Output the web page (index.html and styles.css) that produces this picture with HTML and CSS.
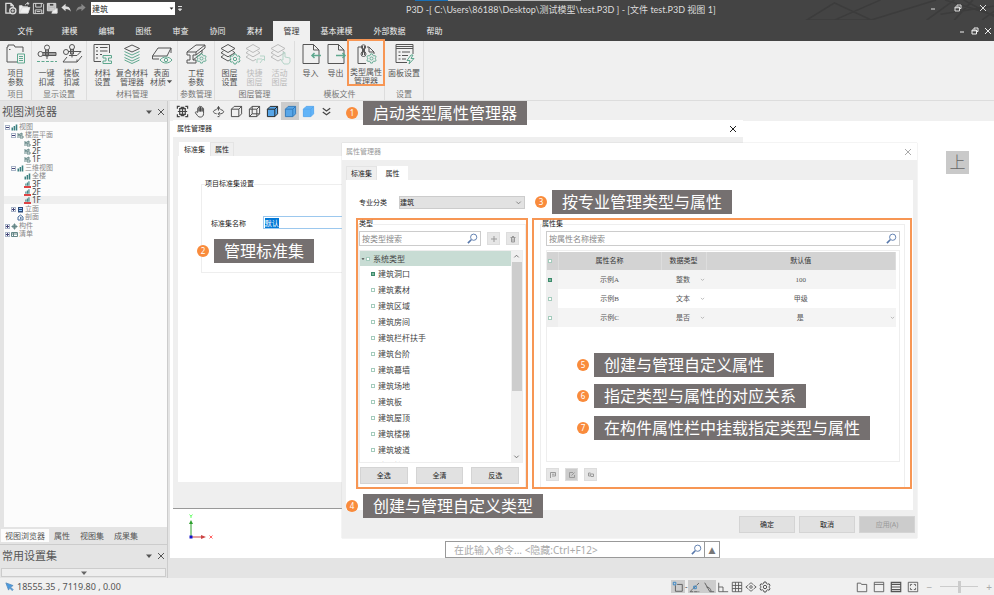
FILE: index.html
```
<!DOCTYPE html>
<html lang="zh-CN">

<head>
    <meta charset="UTF-8">
    <meta name="viewport" content="width=device-width, initial-scale=1.0">
    <title>P3D - 属性管理器</title>
    <link rel="stylesheet" href="styles.css">
</head>

<body>
    <!-- 公用图标 -->
    <svg class="symbols" aria-hidden="true">
        <symbol id="i_search" viewBox="0 0 12 12"><path d="M4.6 7.4L1 11" stroke-width="1.8"/><circle cx="7.3" cy="4.6" r="3.4"/></symbol>
        <symbol id="i_close" viewBox="0 0 8 8"><path d="M1 1l6 6M7 1l-6 6"/></symbol>
        <symbol id="i_restore" viewBox="0 0 8 8"><path d="M3 2.500V1h4v3.500H5.500M1 3h4.500v4H1zM1 3.800h4.500"/></symbol>
        <symbol id="i_down" viewBox="0 0 8 8"><path d="M1 2.500h6L4 6z" fill="currentColor" stroke="none"/></symbol>
        <symbol id="i_chevron" viewBox="0 0 8 8"><path d="M1.500 3L4 5.500 6.500 3"/></symbol>
        <symbol id="i_gear" viewBox="0 0 12 12"><path d="M5 1h2l.4 1.500 1.200.7 1.500-.4 1 1.700L10 5.500v1l1.100 1-1 1.700-1.500-.4-1.200.7L7 11H5l-.4-1.500-1.200-.7-1.500.4-1-1.700L2 6.500v-1l-1.100-1 1-1.700 1.500.4 1.200-.7z"/><circle cx="6" cy="6" r="1.700"/></symbol>
        <symbol id="i_layers" viewBox="0 0 22 22"><path d="M9 1.500l7 4-7 4-7-4zM4.500 8L2 9.800l7 4 7-4L13.500 8M4.500 12.300L2 14l7 4 3-1.700"/></symbol>
        <symbol id="i_cube" viewBox="0 0 14 14"><path d="M1.500 4.500h8v8h-8zM1.500 4.500l3-3h8v8l-3 3M9.500 4.500l3-3"/></symbol>
        <symbol id="i_plan" viewBox="0 0 7 7"><path d="M1 1v5M1 3l4-2v2H1M3 3v3h3V4H3"/></symbol>
        <symbol id="i_bars" viewBox="0 0 7 7"><path d="M.5 3.500h1.500v3H.5zM2.600 2h1.500v4.500H2.600zM4.700.5h1.600v6H4.700z" fill="currentColor" stroke="none"/></symbol>
    </svg>

    <div class="app">
        <header class="title_bar">
            <div class="quick_bar">
                <button aria-label="新建"><svg viewBox="0 0 14 14"><path d="M7 12H2V1.500h5.500L10 4v2M7.500 1.500V4H10" stroke-width="1.400"/><circle cx="9.500" cy="9.500" r="3.300" fill="#444" stroke-width="1.400"/><path d="M9.500 7.700v3.600M7.700 9.500h3.600"/></svg></button>
                <button aria-label="打开"><svg viewBox="0 0 14 14"><path d="M1.500 12V4h3l1 1.200h5V6H4.500zM1.500 12h9.300l2-6H4.500z" fill="#eee"/><path d="M8 3.500c0-1.500 1-2 3-2M9.800.5L12 1.600 10.200 3"/></svg></button>
                <button aria-label="保存"><svg viewBox="0 0 14 14"><path d="M1.500 1.500h10l1 1v10h-11zM4 1.500v4h6v-4M3.500 12V8.500h7V12M5 10.300h4"/></svg></button>
                <button aria-label="另存为"><svg viewBox="0 0 14 14"><path d="M1.500 1.500h9v8h-9zM3.500 1.500v3h5v-3" fill="#bbb"/><path d="M4 7.500h5M7 10l5-3v5H6" fill="#eee"/></svg></button>
                <button aria-label="撤销"><svg viewBox="0 0 14 14"><path d="M6 2L1.500 6 6 10V7.500c3 0 4.500.8 5.500 3C11.500 6.500 9.500 4.700 6 4.500z" fill="#ddd" stroke="none"/></svg></button>
                <button class="dim" aria-label="重做"><svg viewBox="0 0 14 14"><path d="M8 2l4.500 4L8 10V7.500c-3 0-4.500.8-5.500 3C2.500 6.500 4.500 4.700 8 4.500z" fill="#888" stroke="none"/></svg></button>
                <div class="quick_select">
                    <select aria-label="专业"><option>建筑</option></select>
                    <svg viewBox="0 0 8 8"><use href="#i_down"/></svg>
                </div>
                <button class="more" aria-label="更多"><svg viewBox="0 0 8 8"><path d="M2 1.500h4M2.500 4h3L4 5.800z" fill="currentColor"/></svg></button>
            </div>
            <h1>P3D -[ C:\Users\86188\Desktop\测试模型\test.P3D ] - [文件 test.P3D 视图 1]</h1>
            <svg class="title_art" viewBox="0 0 260 28" preserveAspectRatio="none"><path d="M30 28L60 4l40 24zM110 0l-50 28M170 0l-70 28M190 0l-30 28M200 0l40 28M220 28L250 0M175 20l80-16M180 0l70 28M210 0l-20 28"/></svg>
            <div class="window_buttons">
                <button aria-label="最小化"><svg viewBox="0 0 8 8"><path d="M2 5h4"/></svg></button>
                <button aria-label="还原"><svg viewBox="0 0 8 8"><use href="#i_restore"/></svg></button>
                <button aria-label="关闭"><svg viewBox="0 0 8 8"><use href="#i_close"/></svg></button>
            </div>
            <div class="load_line"></div>
        </header>

        <nav class="menu_bar">
            <button class="file">文件</button>
            <button>建模</button>
            <button>编辑</button>
            <button>图纸</button>
            <button>审查</button>
            <button>协同</button>
            <button>素材</button>
            <button class="active">管理</button>
            <button class="wide">基本建模</button>
            <button class="wide">外部数据</button>
            <button>帮助</button>
            <div class="window_buttons small">
                <button aria-label="最小化视图"><svg viewBox="0 0 8 8"><path d="M2 5h4"/></svg></button>
                <button aria-label="还原视图"><svg viewBox="0 0 8 8"><use href="#i_restore"/></svg></button>
                <button aria-label="关闭视图"><svg viewBox="0 0 8 8"><use href="#i_close"/></svg></button>
            </div>
        </nav>

        <div class="ribbon">
            <section class="group">
                <div class="tools">
                    <button class="tool"><svg viewBox="0 0 22 22"><path d="M12 19H2V4h1V2h6l1 2h8v5M4 6.500h1.500"/><path class="green" d="M12.500 11h7v9h-7zM14 13.500h4M14 15.500h4M14 17.500h4"/></svg><span>项目<br>参数</span></button>
                </div>
                <p>项目</p>
            </section>
            <section class="group">
                <div class="tools">
                    <button class="tool"><svg viewBox="0 0 22 22"><circle cx="11" cy="4.500" r="2.500"/><circle cx="4.500" cy="11" r="2.500"/><path d="M11 7v9M7 11h13M7 9.500h13v3H7M9.500 7v6h3V7"/><path class="green" d="M1 18.500h20" stroke-dasharray="3 1.500"/></svg><span>一键<br>扣减</span></button>
                    <button class="tool"><svg viewBox="0 0 22 22"><circle cx="11" cy="4" r="2.500"/><circle cx="5" cy="9" r="2.500"/><path d="M11 6.500v8M7 8.500h13l-4 4H8M9.500 6v5h3V6M6 14l-4 5h14l5-6M16 19v-2.500"/></svg><span>楼板<br>扣减</span></button>
                </div>
                <p>显示设置</p>
            </section>
            <section class="group material">
                <div class="tools">
                    <button class="tool"><svg viewBox="0 0 22 22"><path d="M9 18.500H2v-17h15.500V10M4 4.500h2M8 4.500h7.500M4 8h2M8 8h7.500M4 11.500h2M8 11.500h2M4 15h2"/><path class="green" d="M11 12.500h8.500V15h-3v3h3v2.500H11V18h3v-3h-3z"/></svg><span>材料<br>设置</span></button>
                    <button class="tool"><svg viewBox="0 0 22 22"><path d="M11 2l7.500 3.500L11 9 3.500 5.500z"/><path class="green" d="M3.500 8.500L11 12l7.500-3.500M3.500 11.500L11 15l7.500-3.500M3.500 14.500L11 18l7.500-3.500M3.500 17L11 20.500l7.500-3.500"/></svg><span>复合材料<br>管理器</span></button>
                    <button class="tool"><svg viewBox="0 0 22 22"><path d="M7 5h13l-4 8H1.500zM1.500 13v3H8M20 5v5"/><path class="green" d="M9 17c3-4 9-4 12 0-3 4-9 4-12 0z"/><circle class="green" cx="15" cy="17" r="1.700"/></svg><span>表面</span><span class="drop">材质<svg class="caret" viewBox="0 0 8 8"><use href="#i_down"/></svg></span></button>
                </div>
                <p>材料管理</p>
            </section>
            <section class="group">
                <div class="tools">
                    <button class="tool"><svg viewBox="0 0 22 22"><path d="M2 9L11 2h9l-9 7zM2 9v3h3v5H2v3h9v-3M11 9v3H8v5h3M11 12l9-7V2M8 17l9-7V7"/><svg x="11" y="10" width="11" height="11"><use class="green" href="#i_gear"/></svg></svg><span>工程<br>参数</span></button>
                </div>
                <p>参数管理</p>
            </section>
            <section class="group">
                <div class="tools">
                    <button class="tool"><svg viewBox="0 0 22 22"><use href="#i_layers"/><svg x="10" y="10" width="12" height="12"><use class="green" href="#i_gear"/></svg></svg><span>图层<br>设置</span></button>
                    <button class="tool" disabled><svg viewBox="0 0 22 22"><use href="#i_layers"/><path class="green" d="M13 20v-4h5M16 13h4.500v4.500L19 16l-3 4"/></svg><span>快捷<br>图层</span></button>
                    <button class="tool" disabled><svg viewBox="0 0 22 22"><use href="#i_layers"/><path class="green" d="M14 17V9.500h2V14l5 1v4l-1.500 2H15l-3-4z"/></svg><span>活动<br>图层</span></button>
                </div>
                <p>图层管理</p>
            </section>
            <section class="group template">
                <div class="tools">
                    <button class="tool"><svg viewBox="0 0 22 22"><path d="M3 1.500h10.500L19 7v13.500H3zM13.500 1.500V7H19"/><path class="green" d="M21 12.500h-9M14.500 10L12 12.500l2.500 2.500" stroke-width="1.500"/></svg><span>导入</span></button>
                    <button class="tool"><svg viewBox="0 0 22 22"><path d="M3 1.500h10.500L19 7v13.500H3zM13.500 1.500V7H19"/><path class="green" d="M11 12.500h9M17.500 10l2.500 2.500-2.500 2.500" stroke-width="1.500"/></svg><span>导出</span></button>
                    <button class="tool marked"><svg viewBox="0 0 22 22"><path d="M6 4H3v16.500h8M12 4h2l5 5v2M14 4v5h5"/><circle cx="8.500" cy="4" r="2.200"/><circle cx="8.500" cy="11" r="2.500"/><path d="M7.500 3v9M9.500 3v9M8.500 5.500v4"/><svg x="11" y="10" width="11" height="11"><use class="green" href="#i_gear"/></svg></svg><span>类型属性<br>管理器</span></button>
                </div>
                <p>模板文件</p>
            </section>
            <section class="group template">
                <div class="tools">
                    <button class="tool"><svg viewBox="0 0 22 22"><path d="M14 19.500H3v-18h17V11M3 5.500h17M3 3.500h17M5.500 9h2M9 9h8M5.500 12.500h2M9 12.500h6M5.500 16h2M9 16h4"/><path class="green" d="M18 12l-4 5.500h3L16 21l5-5.500h-3l2-3.500z"/></svg><span>面板设置</span></button>
                </div>
                <p>设置</p>
            </section>
        </div>

        <main class="main">
            <aside class="sidebar">
                <div class="panel_head">
                    <h2>视图浏览器</h2>
                    <button aria-label="折叠"><svg viewBox="0 0 8 8"><use href="#i_down"/></svg></button>
                    <button aria-label="关闭面板"><svg viewBox="0 0 8 8"><use href="#i_close"/></svg></button>
                </div>
                <div class="view_tree">
                    <ul>
                        <li><div class="node"><i class="fold"></i><svg class="teal"><use href="#i_bars"/></svg>视图</div>
                            <ul>
                                <li><div class="node"><i class="fold"></i><svg><use href="#i_plan"/></svg>楼层平面</div>
                                    <ul>
                                        <li><div class="node floor"><svg><use href="#i_plan"/></svg>3F</div></li>
                                        <li><div class="node floor"><svg><use href="#i_plan"/></svg>2F</div></li>
                                        <li><div class="node floor"><svg><use href="#i_plan"/></svg>1F</div></li>
                                    </ul>
                                </li>
                                <li><div class="node"><i class="fold"></i><svg class="teal"><use href="#i_bars"/></svg>三维视图</div>
                                    <ul>
                                        <li><div class="node"><svg class="teal"><use href="#i_bars"/></svg>全楼</div></li>
                                        <li><div class="node floor red"><svg class="teal"><use href="#i_bars"/></svg>3F</div></li>
                                        <li><div class="node floor red"><svg class="teal"><use href="#i_bars"/></svg>2F</div></li>
                                        <li><div class="node floor red current"><svg class="teal"><use href="#i_bars"/></svg>1F</div></li>
                                    </ul>
                                </li>
                                <li><div class="node"><i class="fold plus"></i><svg viewBox="0 0 7 7"><path d="M1 1h5v5.500H1z" fill="#2c4a78" stroke="none"/><path d="M2 2.500h3M2 4.500h3" stroke="#9cf"/></svg>立面</div></li>
                                <li><div class="node"><i class="blank"></i><svg viewBox="0 0 7 7"><path d="M1 3l2.500-2L6 3v3H1zM3 3l1.500 1L3 5" stroke="#456a9a"/></svg>剖面</div></li>
                            </ul>
                        </li>
                        <li><div class="node"><i class="fold plus"></i><svg viewBox="0 0 7 7"><path d="M3.500.5v6M.5 3.500h6M2 2h3v3H2z"/></svg>构件</div></li>
                        <li><div class="node"><i class="fold plus"></i><svg viewBox="0 0 7 7"><path d="M.5 1.500h6v4h-6zM.5 3h6M2.500 1.500v4"/></svg>清单</div></li>
                    </ul>
                </div>
                <div class="side_tabs">
                    <button class="active">视图浏览器</button>
                    <button>属性</button>
                    <button>视图集</button>
                    <button>成果集</button>
                </div>
                <div class="panel_head second">
                    <h2>常用设置集</h2>
                    <button aria-label="折叠"><svg viewBox="0 0 8 8"><use href="#i_down"/></svg></button>
                    <button aria-label="关闭面板"><svg viewBox="0 0 8 8"><use href="#i_close"/></svg></button>
                </div>
                <button class="expand" aria-label="展开"><svg viewBox="0 0 8 8"><use href="#i_down"/></svg></button>
            </aside>

            <div class="workspace">
                <div class="view_bar">
                    <button aria-label="全图"><svg viewBox="0 0 14 14"><path d="M1.500 4V1.500H4M10 1.500h2.500V4M12.500 10v2.500H10M4 12.500H1.500V10M7 2v10M2 7h10M4 4h6v6H4zM5 2.500h4M5 11.500h4" stroke-width="1.300"/></svg></button>
                    <button aria-label="平移"><svg viewBox="0 0 14 14"><path d="M4 8V3.500c0-1 1.500-1 1.500 0V7 2c0-1 1.600-1 1.600 0v5-4.500c0-1 1.600-1 1.600 0V7 4c0-1 1.600-1 1.600 0v5c0 3-1.500 4-3.500 4S4 12 3.500 11L1.500 8.500C1 7.500 2.500 7 3 7.500z"/></svg></button>
                    <button aria-label="旋转"><svg viewBox="0 0 14 14"><path d="M5 5L7 1.500 9 5M7 2v4M4.500 5C.5 6 .5 8.500 5 9.500M9.500 5c4 1 4 3.500 0 4.500H7M8.500 7.500L6.500 9.500l2 2M6 12.500h2"/></svg></button>
                    <button aria-label="消隐"><svg viewBox="0 0 14 14"><use href="#i_cube"/></svg></button>
                    <button aria-label="线框"><svg viewBox="0 0 14 14"><use href="#i_cube"/><path d="M4.500 1.500v8h8M4.500 9.500l-3 3"/></svg></button>
                    <button class="shade line" aria-label="着色带边"><svg viewBox="0 0 14 14"><use href="#i_cube"/></svg></button>
                    <button class="shade active" aria-label="真实"><svg viewBox="0 0 14 14"><use href="#i_cube"/></svg></button>
                    <button class="shade soft" aria-label="着色"><svg viewBox="0 0 14 14"><use href="#i_cube"/></svg></button>
                    <button aria-label="更多视图"><svg viewBox="0 0 14 14"><path d="M3 3.500L7 6.500l4-3M3 7.500l4 3 4-3" stroke-width="1.300"/></svg></button>
                </div>

                <div class="canvas">
                    <div class="view_cube">上</div>
                    <svg class="axis" viewBox="0 0 30 30"><path d="M7 24V10" stroke="#2ca02c"/><path d="M5 11l2-4 2 4z" fill="#2ca02c" stroke="none"/><path d="M7 24h11" stroke="#c44"/><path d="M17 22l5 2-5 2z" fill="#c44" stroke="none"/><path d="M5.500 22.500h3v3h-3z" fill="#11c" stroke="none"/><path d="M5.500 1.500L7 3.200l1.500-1.700M7 3v2" stroke="#6f6"/><path d="M25.500 22.500l3 3M28.500 22.500l-3 3" stroke="#f66"/></svg>
                    <form class="command">
                        <input type="text" aria-label="命令" placeholder="在此输入命令... &lt;隐藏:Ctrl+F12&gt;">
                        <svg class="find" viewBox="0 0 12 12"><use href="#i_search"/></svg>
                        <button type="button" aria-label="历史命令">▲</button>
                    </form>
                </div>

                <section class="dialog standard">
                    <header><h3>属性管理器</h3><button aria-label="关闭对话框"><svg viewBox="0 0 8 8"><use href="#i_close"/></svg></button></header>
                    <div class="tabs"><button class="active">标准集</button><button>属性</button></div>
                    <div class="page">
                        <fieldset>
                            <legend>项目标准集设置</legend>
                            <label for="set_name">标准集名称</label>
                            <input type="text" id="set_name" value="默认">
                        </fieldset>
                    </div>
                </section>

                <section class="dialog attribute">
                    <header><h3>属性管理器</h3><button aria-label="关闭对话框"><svg viewBox="0 0 8 8"><use href="#i_close"/></svg></button></header>
                    <div class="tabs"><button>标准集</button><button class="active">属性</button></div>
                    <div class="page">
                        <div class="major">
                            <label for="major">专业分类</label>
                            <div class="major_select">
                                <select id="major"><option>建筑</option></select>
                                <svg viewBox="0 0 8 8"><use href="#i_chevron"/></svg>
                            </div>
                        </div>
                        <div class="panes">
                            <div class="pane types">
                                <fieldset>
                                    <legend>类型</legend>
                                    <div class="search_row">
                                        <div class="search">
                                            <input type="text" aria-label="按类型搜索" placeholder="按类型搜索">
                                            <svg class="find" viewBox="0 0 12 12"><use href="#i_search"/></svg>
                                        </div>
                                        <button class="mini" aria-label="添加"><svg viewBox="0 0 8 8"><path d="M4 1v6M1 4h6"/></svg></button>
                                        <button class="mini" aria-label="删除"><svg viewBox="0 0 8 8"><path d="M1.500 2.500h5M3 1.500h2M2.500 2.500V7h3V2.500M4 3.500v3"/></svg></button>
                                    </div>
                                    <div class="type_box">
                                        <div class="type_list">
                                            <label class="root"><svg viewBox="0 0 8 8"><use href="#i_down"/></svg><input type="checkbox">系统类型</label>
                                            <label><input type="checkbox" checked>建筑洞口</label>
                                            <label><input type="checkbox">建筑素材</label>
                                            <label><input type="checkbox">建筑区域</label>
                                            <label><input type="checkbox">建筑房间</label>
                                            <label><input type="checkbox">建筑栏杆扶手</label>
                                            <label><input type="checkbox">建筑台阶</label>
                                            <label><input type="checkbox">建筑幕墙</label>
                                            <label><input type="checkbox">建筑场地</label>
                                            <label><input type="checkbox">建筑板</label>
                                            <label><input type="checkbox">建筑屋顶</label>
                                            <label><input type="checkbox">建筑楼梯</label>
                                            <label><input type="checkbox">建筑坡道</label>
                                            <label><input type="checkbox">建筑柱</label>
                                        </div>
                                        <div class="scroll">
                                            <svg class="up" viewBox="0 0 8 8"><use href="#i_chevron"/></svg>
                                            <div class="thumb"></div>
                                            <svg viewBox="0 0 8 8"><use href="#i_chevron"/></svg>
                                        </div>
                                    </div>
                                    <div class="pick_row">
                                        <button>全选</button>
                                        <button>全清</button>
                                        <button>反选</button>
                                    </div>
                                </fieldset>
                            </div>
                            <div class="pane attrs">
                                <fieldset>
                                    <legend>属性集</legend>
                                    <div class="search">
                                        <input type="text" aria-label="按属性名称搜索" placeholder="按属性名称搜索">
                                        <svg class="find" viewBox="0 0 12 12"><use href="#i_search"/></svg>
                                    </div>
                                    <div class="table_box">
                                        <table>
                                            <thead>
                                                <tr><th class="check"><input type="checkbox" aria-label="全选属性"></th><th class="name">属性名称</th><th class="kind">数据类型</th><th>默认值</th></tr>
                                            </thead>
                                            <tbody>
                                                <tr><td class="check"><input type="checkbox" aria-label="示例A" checked></td><td>示例A</td><td><div class="cell_select"><select aria-label="示例A 类型"><option>整数</option></select><svg viewBox="0 0 8 8"><use href="#i_chevron"/></svg></div></td><td>100</td></tr>
                                                <tr><td class="check"><input type="checkbox" aria-label="示例B"></td><td>示例B</td><td><div class="cell_select"><select aria-label="示例B 类型"><option>文本</option></select><svg viewBox="0 0 8 8"><use href="#i_chevron"/></svg></div></td><td>甲级</td></tr>
                                                <tr><td class="check"><input type="checkbox" aria-label="示例C"></td><td>示例C</td><td><div class="cell_select"><select aria-label="示例C 类型"><option>是否</option></select><svg viewBox="0 0 8 8"><use href="#i_chevron"/></svg></div></td><td><div class="cell_select"><select aria-label="示例C 默认值"><option>是</option></select><svg viewBox="0 0 8 8"><use href="#i_chevron"/></svg></div></td></tr>
                                            </tbody>
                                        </table>
                                    </div>
                                    <div class="attr_tools">
                                        <button class="mini" aria-label="新增属性"><svg viewBox="0 0 8 8"><path d="M1.500 7V1.500h5V5H3M3 3.200h2.500"/></svg></button>
                                        <button class="mini dark" aria-label="编辑属性"><svg viewBox="0 0 8 8"><path d="M5 1.500H1.500v5h5V4M3.500 4.500l3-3"/></svg></button>
                                        <button class="mini" aria-label="移除属性"><svg viewBox="0 0 8 8"><path d="M1.500 2v3h2M3 3h3.500v2.500H4zM1.500 2h2"/></svg></button>
                                    </div>
                                </fieldset>
                            </div>
                        </div>
                    </div>
                    <footer>
                        <button>确定</button>
                        <button>取消</button>
                        <button disabled>应用(A)</button>
                    </footer>
                </section>

                <!-- 操作步骤标注 -->
                <p class="step step_1"><b>1</b><span>启动类型属性管理器</span></p>
                <p class="step step_2"><b>2</b><span>管理标准集</span></p>
                <p class="step step_3"><b>3</b><span>按专业管理类型与属性</span></p>
                <p class="step step_4"><b>4</b><span>创建与管理自定义类型</span></p>
                <p class="step step_5"><b>5</b><span>创建与管理自定义属性</span></p>
                <p class="step step_6"><b>6</b><span>指定类型与属性的对应关系</span></p>
                <p class="step step_7"><b>7</b><span>在构件属性栏中挂载指定类型与属性</span></p>
            </div>
        </main>

        <footer class="status_bar">
            <svg class="pointer" viewBox="0 0 10 10"><path d="M1 1l8 3-3 1.500L9 8.500 8 9.500 5 6.500 4 9z" fill="#4a9be0" stroke="#5a8fc0"/></svg>
            <span class="coords">18555.35 , 7119.80 , 0.00</span>
            <div class="snap">
                <button class="on" aria-label="捕捉"><svg viewBox="0 0 14 14"><path d="M4 5v7h8V4H6"/><path d="M1.500 1.500h3v3h-3z" stroke="#2a7fc4"/></svg></button>
                <i>-</i>
                <button class="on" aria-label="最近点"><svg viewBox="0 0 14 14"><path d="M1 12.500h11M1.500 12L12 2" stroke-dasharray="4 1"/><path d="M5.500 6h3v3h-3z" stroke="#2a7fc4"/></svg></button>
                <button class="on" aria-label="极轴"><svg viewBox="0 0 14 14"><path d="M2 2l6 10.500h5M4 7c3 0 5 2 5.500 5"/></svg></button>
                <button aria-label="正交"><svg viewBox="0 0 14 14"><path d="M2 2v10.500h11M2 7h5v5.500"/></svg></button>
                <button aria-label="栅格"><svg viewBox="0 0 14 14"><path d="M1.500 1.500h11v11h-11zM5.200 1.500v11M8.800 1.500v11M1.500 5.200h11M1.500 8.800h11"/></svg></button>
                <button aria-label="追踪"><svg viewBox="0 0 14 14"><circle cx="7" cy="7" r="1.500"/><path d="M4 4.500L7 2l3 2.500M4 9.500L7 12l3-2.500M3.500 5L1 7l2.500 2M10.500 5L13 7l-2.500 2"/></svg></button>
                <button aria-label="设置"><svg viewBox="0 0 12 12"><use href="#i_gear"/></svg></button>
            </div>
            <div class="layout">
                <button aria-label="新窗口"><svg viewBox="0 0 14 14"><path d="M1.500 2.500h4l1 1.500h6v8.500h-11z"/></svg></button>
                <button aria-label="单窗口"><svg viewBox="0 0 14 14"><path d="M1.500 1.500h11v11h-11zM1.500 4h11"/></svg></button>
                <button aria-label="平铺"><svg viewBox="0 0 14 14"><path d="M1.500 1.500h11v11h-11zM2 4h10M2 7h10M2 10h10" stroke-width="1.400"/></svg></button>
                <button aria-label="全屏"><svg viewBox="0 0 14 14"><path d="M1.500 1.500h11v11h-11zM4 6V4h2M8 4h2v2M10 8v2H8M6 10H4V8"/></svg></button>
            </div>
            <div class="zoom"><span>−</span><input type="range" aria-label="缩放" min="0" max="100" value="50"><span>+</span></div>
        </footer>
    </div>

    <script>
        // 打开时选中标准集名称
        const set_name = document.getElementById('set_name');
        set_name.focus();
        set_name.select();
    </script>
</body>

</html>
```
FILE: styles.css
```
* {
    box-sizing: border-box;
}

body {
    margin: 0;
    font-family: "Noto Sans", "Noto Sans CJK SC", sans-serif;
    font-size: 8px;
    line-height: 10px;
    color: #333;
    background-color: #e4e4e4;
}

h1, h2, h3, p, ul, fieldset, legend {
    margin: 0;
    padding: 0;
    font-size: inherit;
    font-weight: normal;
}

ul {
    list-style: none;
}

i, b {
    font-style: normal;
    font-weight: normal;
}

button, input, select {
    margin: 0;
    padding: 0;
    border: none;
    border-radius: 0;
    outline: none;
    background: none;
    font: inherit;
    color: inherit;
    appearance: none;
}

svg {
    display: block;
    flex: none;
    fill: none;
    stroke: currentColor;
    stroke-width: 1;
}

.symbols {
    position: absolute;
    width: 0;
    height: 0;
}

.app {
    display: flex;
    flex-direction: column;
    height: 100vh;
    overflow: hidden;
}

/* 标题栏 */
.title_bar {
    position: relative;
    display: flex;
    align-items: center;
    height: 20px;
    flex: none;
    background-color: #444;
    color: #ddd;
}

.quick_bar {
    display: flex;
    align-items: center;
    width: 406px;
    padding: 0 0 3px 4px;
}

.quick_bar button {
    width: 14px;
}

.quick_bar button svg {
    width: 13px;
    height: 13px;
}

.quick_select {
    display: flex;
    align-items: center;
    width: 84px;
    height: 13px;
    margin: 0 1px 0 3px;
    background-color: #fff;
    color: #222;
}

.quick_select select {
    flex: 1;
    padding-left: 1px;
}

.quick_select svg {
    width: 5px;
    height: 5px;
    margin-right: 1px;
}

.quick_bar .more svg {
    width: 8px;
    height: 8px;
}

.title_bar h1 {
    flex: 1;
    font-family: Lato, "Noto Sans CJK SC", sans-serif;
    font-size: 9px;
    line-height: 12px;
    white-space: nowrap;
}

.title_art {
    width: 240px;
    height: 20px;
    margin-right: -90px;
    stroke: #3c3c3c;
    stroke-width: 2;
}

.window_buttons {
    position: relative;
    display: flex;
    gap: 17px;
    margin: 0 7px 4px auto;
}

.window_buttons svg {
    width: 8px;
    height: 8px;
}

.window_buttons.small {
    gap: 5px;
    margin: 0 2px 0 auto;
}

.load_line {
    position: absolute;
    top: 0;
    left: 415px;
    width: 166px;
    height: 1px;
    background: linear-gradient(to right, #1a6fb5 33px, #bbb 33px);
}

/* 菜单 */
.menu_bar {
    display: flex;
    align-items: center;
    height: 21px;
    flex: none;
    background-color: #444;
    color: #f0f0f0;
}

.menu_bar > button {
    width: 37px;
    height: 20px;
    margin-top: 1px;
}

.menu_bar > .file {
    width: 51px;
}

.menu_bar > .wide {
    width: 53px;
}

.menu_bar > .active {
    background-color: #f0f0f0;
    color: #333;
}

/* 功能区 */
.ribbon {
    display: flex;
    height: 60px;
    flex: none;
    background-color: #f0f0f0;
    border-bottom: 1px solid #ddd;
}

.group {
    display: flex;
    flex-direction: column;
    justify-content: space-between;
    padding: 2px 2px 1px;
    border-right: 1px solid #ddd;
    text-align: center;
}

.group:first-child,
.group.template {
    padding: 2px 3px 1px;
}

.group p {
    color: #777;
    white-space: nowrap;
}

.tools {
    display: flex;
    justify-content: center;
}

.tool {
    display: flex;
    flex-direction: column;
    align-items: center;
    min-width: 25px;
    line-height: 9px;
    white-space: nowrap;
    color: #555;
}

.tool > svg {
    width: 22px;
    height: 22px;
    margin-bottom: 3px;
}

.tool .drop {
    display: flex;
    align-items: center;
}

.tool .caret {
    width: 7px;
    height: 7px;
}

.tool:disabled {
    color: #bbb;
}

.green {
    stroke: #5fa88f;
}

.tool:disabled .green {
    stroke: #b5d4c8;
}

.material .tool {
    min-width: 27px;
}

.tool.marked {
    width: 38px;
    height: 47px;
    margin: -4px -4px 0 -1px;
    padding-top: 2px;
    border: 2px solid #f79654;
    overflow: hidden;
}

.tool.marked > svg {
    margin-bottom: 2px;
}

/* 主区域 */
.main {
    display: flex;
    flex: 1;
    min-height: 0;
}

.sidebar {
    display: flex;
    flex-direction: column;
    width: 168px;
    flex: none;
    border-right: 1px solid #ccc;
}

.panel_head {
    display: flex;
    align-items: center;
    gap: 4px;
    height: 21px;
    padding: 0 2px;
    color: #555;
}

.panel_head h2 {
    flex: 1;
    font-size: 11px;
    line-height: 16px;
}

.panel_head svg {
    width: 8px;
    height: 8px;
}

.view_tree {
    flex: 1;
    margin-left: 4px;
    padding-top: 1px;
    background-color: #fcfcfc;
    font-size: 7px;
    line-height: 8px;
    color: #888;
}

.view_tree ul ul {
    margin-bottom: 1px;
}

.node {
    display: flex;
    align-items: center;
    gap: 1px;
    height: 8px;
    padding-left: 1px;
}

.view_tree ul ul .node {
    padding-left: 7px;
}

.view_tree ul ul ul .node {
    padding-left: 20px;
}

.node svg {
    width: 7px;
    height: 7px;
    color: #688;
    stroke-width: 1;
}

.node .teal {
    color: #3a8080;
}

.node.floor {
    font-size: 8px;
    color: #444;
}

.node.red svg {
    border-bottom: 2px solid #d44;
}

.node.current {
    background-color: #efefef;
}

.fold {
    width: 5px;
    height: 5px;
    border: 1px solid #a9b4c8;
    background: linear-gradient(#447, #447) center / 3px 1px no-repeat;
}

.fold.plus {
    background: linear-gradient(#447, #447) center / 3px 1px no-repeat, linear-gradient(#447, #447) center / 1px 3px no-repeat;
}

.blank {
    width: 5px;
}

.side_tabs {
    display: flex;
    height: 16px;
    margin-top: 2px;
    padding: 0 1px 2px;
    border-bottom: 1px solid #ccc;
    color: #555;
}

.side_tabs button {
    padding: 0 5px;
    white-space: nowrap;
}

.side_tabs .active {
    padding: 0 4px;
    background-color: #fcfcfc;
}

.panel_head.second {
    margin-bottom: 2px;
}

.expand {
    display: flex;
    justify-content: center;
    align-items: center;
    height: 9px;
    margin: 0 1px 1px;
    border: 1px solid #ccc;
    background-color: #eee;
    color: #666;
}

.expand svg {
    width: 8px;
    height: 8px;
}

.workspace {
    position: relative;
    display: flex;
    flex-direction: column;
    flex: 1;
    margin-left: 2px;
    padding-bottom: 20px;
}

.view_bar {
    display: flex;
    align-items: center;
    height: 20px;
    padding-left: 3px;
    background-color: #f0f0f0;
    color: #444;
}

.view_bar button {
    display: flex;
    justify-content: center;
    align-items: center;
    width: 18px;
    height: 18px;
}

.view_bar button.active {
    background-color: #ccc;
}

.view_bar svg {
    width: 13px;
    height: 13px;
}

.shade svg {
    fill: #58a6e8;
    color: #3178b8;
}

.shade.line svg {
    color: #222;
}

.shade.soft svg {
    fill: #62b4f8;
    color: #55a6ee;
}

.canvas {
    position: relative;
    flex: 1;
    background-color: #fff;
}

.view_cube {
    position: absolute;
    top: 30px;
    right: 25px;
    width: 23px;
    height: 23px;
    background-color: #c9c9c9;
    color: #666;
    font-size: 16px;
    font-weight: 300;
    line-height: 22px;
    text-align: center;
}

.axis {
    position: absolute;
    left: 14px;
    bottom: 15px;
    width: 30px;
    height: 30px;
}

.command {
    position: absolute;
    bottom: 0;
    left: 50%;
    display: flex;
    align-items: center;
    width: 275px;
    height: 17px;
    margin-left: -137px;
    border: 1px solid #999;
    background-color: #fff;
    font-size: 10px;
}

.command input {
    flex: 1;
    padding-left: 8px;
}

::placeholder {
    color: #888;
    opacity: 1;
}

.command ::placeholder {
    color: #aaa;
}

.find {
    width: 11px;
    height: 11px;
    margin: 0 2px;
    color: #5878ab;
}

.command button {
    width: 15px;
    height: 15px;
    border-left: 1px solid #999;
    font-family: "DejaVu Sans", sans-serif;
    font-size: 9px;
    color: #777;
}

/* 对话框 */
.dialog {
    position: absolute;
    display: flex;
    flex-direction: column;
    background-color: #efefef;
    font-size: 7px;
    color: #222;
}

.dialog header {
    display: flex;
    justify-content: space-between;
    align-items: center;
    height: 17px;
    padding: 0 5px 0 4px;
    background-color: #fff;
}

.dialog header svg {
    width: 8px;
    height: 8px;
}

.tabs {
    display: flex;
    padding: 5px 6px 0;
}

.tabs button {
    height: 14px;
    padding: 0 4px;
    border: 1px solid #e4e4e4;
    border-bottom: none;
}

.tabs .active {
    min-width: 31px;
    border-color: #fff;
    background-color: #fff;
}

.page {
    flex: 1;
    margin: 0 5px;
    background-color: #fff;
}

.standard {
    top: 19px;
    left: 3px;
    width: 570px;
    height: 389px;
    padding-bottom: 26px;
    border-bottom: 1px solid #999;
}

.standard header {
    padding-right: 6px;
}

.standard .page {
    padding: 23px 23px 0;
}

.standard fieldset {
    padding: 27px 0 43px 9px;
    border: 1px solid #eee;
}

.standard legend {
    margin-left: -6px;
}

.standard label {
    display: inline-block;
    width: 50px;
}

.standard input {
    width: 240px;
    height: 13px;
    padding-left: 1px;
    border: 1px solid #9cc8ee;
}

.standard input::selection {
    background-color: #0078d7;
    color: #fff;
}

.attribute {
    top: 42px;
    left: 172px;
    width: 575px;
    box-shadow: 0 0 1px #bbb;
}

.attribute header {
    color: #999;
}

.attribute header svg {
    color: #aaa;
}

.attribute .tabs {
    padding: 6px 4px 0;
}

.attribute .page {
    margin: 0 4px;
    padding: 16px 1px 21px 10px;
}

.major {
    display: flex;
    align-items: center;
    gap: 12px;
    margin-bottom: 9px;
    padding-left: 3px;
}

.major_select {
    display: flex;
    align-items: center;
    width: 126px;
    height: 13px;
    padding-right: 2px;
    border: 1px solid #ccc;
    background-color: #e2e2e2;
}

.major_select select {
    flex: 1;
}

.major_select svg {
    width: 7px;
    height: 7px;
    color: #777;
}

.panes {
    display: flex;
    gap: 4px;
}

.pane {
    border: 2px solid #f79654;
}

.pane.types {
    width: 172px;
}

.pane.attrs {
    flex: 1;
    padding: 0 5px 0 6px;
}

.pane fieldset {
    min-width: 0;
    padding-top: 3px;
    border: 1px solid #eee;
    border-bottom: none;
}

.pane legend {
    line-height: 8px;
}

.attrs fieldset {
    padding: 3px 4px 6px 5px;
}

.attrs legend {
    margin-left: -4px;
}

.search_row {
    display: flex;
    align-items: center;
    gap: 6px;
    padding-right: 6px;
}

.search {
    display: flex;
    align-items: center;
    flex: 1;
    min-width: 0;
    height: 15px;
    border: 1px solid #ccc;
    font-size: 8px;
}

.search input {
    flex: 1;
    min-width: 0;
    padding-left: 2px;
}

.mini {
    display: flex;
    justify-content: center;
    align-items: center;
    flex: none;
    width: 13px;
    height: 13px;
    border: 1px solid #ddd;
    background-color: #e6e6e6;
    color: #999;
}

.mini.dark {
    background-color: #ccc;
}

.mini svg {
    width: 8px;
    height: 8px;
}

.type_box {
    display: flex;
    height: 213px;
    margin: 4px 2px 4px 0;
    border: 1px solid #eee;
}

.type_list {
    flex: 1;
    overflow: hidden;
    font-size: 8px;
    color: #444;
}

.type_list label {
    display: flex;
    align-items: center;
    gap: 3px;
    height: 16px;
    padding-left: 11px;
}

.type_list .root {
    height: 15px;
    padding-left: 1px;
    background-color: #c8dcd4;
}

.type_list svg {
    width: 4px;
    height: 4px;
    margin-right: -2px;
}

input[type="checkbox"] {
    display: block;
    width: 4px;
    height: 4px;
    border: 1px solid #a4cbbc;
    background-color: #fff;
}

input[type="checkbox"]:checked {
    border-color: #3d8b6c;
    background-color: #7fb8a0;
}

.scroll {
    display: flex;
    flex-direction: column;
    align-items: center;
    width: 11px;
    background-color: #f0f0f0;
}

.scroll svg {
    width: 7px;
    height: 11px;
    color: #666;
}

.scroll .up {
    transform: rotate(180deg);
}

.thumb {
    width: 10px;
    height: 129px;
    margin-bottom: auto;
    background-color: #cdcdcd;
}

.pick_row {
    display: flex;
    gap: 8px;
    padding: 0 6px 3px 1px;
}

.pick_row button,
.dialog footer button {
    flex: 1;
    height: 17px;
    border: 1px solid #d4d4d4;
    background-color: #e1e1e1;
}

.table_box {
    height: 212px;
    margin: 4px 0 6px;
    padding: 1px 3px 0 0;
    border: 1px solid #eee;
}

table {
    width: 100%;
    table-layout: fixed;
    border-collapse: collapse;
    font-family: "Liberation Serif", "Noto Sans CJK SC", serif;
    font-size: 7px;
    color: #555;
    text-align: center;
}

th, td {
    height: 19px;
    padding: 0;
    font-weight: normal;
}

thead th {
    height: 18px;
    border-right: 1px solid #ddd;
    background-color: #d3d3d3;
    color: #333;
}

tbody tr:nth-child(odd) {
    background-color: #f4f4f4;
}

.check {
    width: 11px;
    padding-left: 1px;
}

td.check {
    background-color: #efefef;
}

.name {
    width: 103px;
}

.kind {
    width: 45px;
}

.cell_select {
    display: flex;
    align-items: center;
    width: 100%;
}

.cell_select select {
    flex: 1;
    padding-left: 5px;
    text-align: center;
    text-align-last: center;
}

.cell_select svg {
    width: 5px;
    height: 5px;
    margin-right: 1px;
    color: #999;
}

.attr_tools {
    display: flex;
    gap: 6px;
}

.dialog footer {
    display: flex;
    justify-content: flex-end;
    gap: 4px;
    padding: 6px 2px 5px;
}

.dialog footer button {
    flex: none;
    width: 56px;
}

.dialog footer button:disabled {
    background-color: #ccc;
    color: #999;
}

/* 步骤标注 */
.step {
    position: absolute;
    display: flex;
    align-items: center;
    gap: 5px;
}

.step b {
    width: 12px;
    height: 12px;
    border-radius: 50%;
    background-color: #f98b3c;
    color: #fff;
    line-height: 12px;
    text-align: center;
}

.step span {
    padding: 0 10px;
    background-color: #757070;
    color: #fff;
    font-size: 16px;
    line-height: 24px;
    white-space: nowrap;
}

.step_1 {
    top: 0;
    left: 176px;
}

.step_2 {
    top: 138px;
    left: 27px;
}

.step_3 {
    top: 89px;
    left: 365px;
}

.step_4 {
    top: 393px;
    left: 176px;
}

.step_5 {
    top: 252px;
    left: 407px;
}

.step_6 {
    top: 283px;
    left: 407px;
}

.step_7 {
    top: 315px;
    left: 407px;
}

/* 状态栏 */
.status_bar {
    display: flex;
    align-items: center;
    height: 17px;
    flex: none;
    padding: 0 2px 0 5px;
    background-color: #f0f0f0;
    color: #555;
}

.pointer {
    width: 9px;
    height: 9px;
    margin-right: 3px;
}

.coords {
    font-size: 9px;
}

.snap {
    display: flex;
    align-items: center;
    margin-left: auto;
}

.snap button,
.layout button {
    display: flex;
    justify-content: center;
    align-items: center;
    width: 14px;
    height: 13px;
}

.snap .on {
    background-color: #ccc;
}

.snap svg,
.layout svg {
    width: 12px;
    height: 12px;
}

.layout {
    display: flex;
    gap: 3px;
    margin-left: 83px;
}

.zoom {
    display: flex;
    align-items: center;
    gap: 8px;
    margin-left: 7px;
    color: #aaa;
    font-size: 10px;
}

.zoom input {
    width: 38px;
    height: 12px;
    background: linear-gradient(#ccc, #ccc) center / 100% 1px no-repeat;
}

.zoom input::-webkit-slider-thumb {
    width: 3px;
    height: 12px;
    background-color: #ccc;
    appearance: none;
}
```
